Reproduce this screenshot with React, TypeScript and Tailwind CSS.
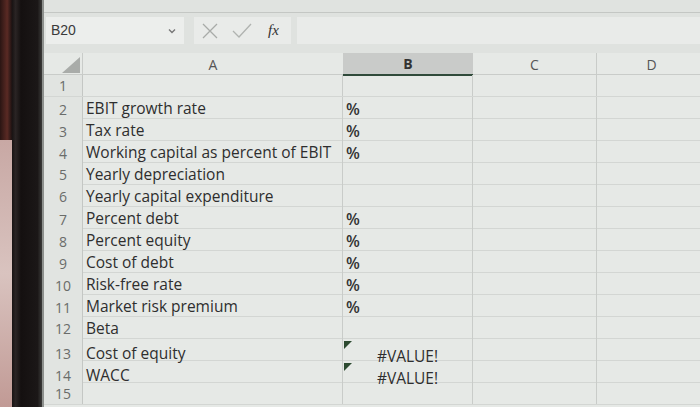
import React from 'react';

const rows: { label: string; b?: string; err?: boolean }[] = [
  { label: '' },
  { label: 'EBIT growth rate', b: '%' },
  { label: 'Tax rate', b: '%' },
  { label: 'Working capital as percent of EBIT', b: '%' },
  { label: 'Yearly depreciation' },
  { label: 'Yearly capital expenditure' },
  { label: 'Percent debt', b: '%' },
  { label: 'Percent equity', b: '%' },
  { label: 'Cost of debt', b: '%' },
  { label: 'Risk-free rate', b: '%' },
  { label: 'Market risk premium', b: '%' },
  { label: 'Beta' },
  { label: 'Cost of equity', err: true },
  { label: 'WACC', err: true },
  { label: '' },
];

const cols = 'grid grid-cols-[38px_261px_130px_124px_1fr]';

const App = () => {
  return (
    <div className="w-[700px] h-[407px] flex overflow-hidden bg-[#e6e9e6] font-['Open_Sans','Noto_Sans',sans-serif]">
      {/* monitor bezel */}
      <div className="w-[12px] flex flex-col">
        <div className="h-[140px] bg-[linear-gradient(90deg,#2a1513,#5a2a24_60%,#1c1212)]" />
        <div className="flex-1 bg-[linear-gradient(180deg,#c8a8a4,#d9c3bf_50%,#c19a95)]" />
      </div>
      <div className="w-[30px] bg-[linear-gradient(90deg,#181313,#2a2424_12%,#141010_30%,#1b1717_85%,#3a3a38)]" />
      <div className="w-[2px] bg-[#8d908d]" />

      <div className="flex-1 flex flex-col">
        {/* ribbon edge */}
        <div className="h-[13px] bg-[#e0e3e0] border-b border-[#c4c7c4]" />

        {/* formula bar */}
        <div className="h-[40px] flex items-start pt-[4px] bg-[#dfe2df]">
          <div className="ml-[2px] w-[138px] h-[27px] bg-[#eceeec] flex items-center justify-between px-[5px]">
            <span className="text-[14px] text-[#3a3a3a] font-['Liberation_Sans',sans-serif]">B20</span>
            <svg width="10" height="8" viewBox="0 0 10 8" className="mr-[2px]">
              <path d="M2 2.5 L5 5.5 L8 2.5" fill="none" stroke="#777" strokeWidth="1.4" />
            </svg>
          </div>
          <div className="ml-[10px] w-[97px] h-[27px] bg-[#e9ebe9] flex items-center pl-[6px] gap-[11px]">
            <svg width="20" height="18" viewBox="0 0 20 18">
              <path d="M3 2 L17 16 M17 2 L3 16" stroke="#a8aba8" strokeWidth="1.3" fill="none" />
            </svg>
            <svg width="22" height="18" viewBox="0 0 22 18">
              <path d="M2 9 L8 15 L20 2" stroke="#b0b3b0" strokeWidth="1.3" fill="none" />
            </svg>
            <span className="ml-[4px] text-[15px] italic text-[#333] font-['Liberation_Serif',serif]">fx</span>
          </div>
          <div className="ml-[6px] flex-1 h-[27px] bg-[#e9ebe9]" />
        </div>

        {/* column headers */}
        <div className={`${cols} h-[22px] border-b border-[#c9ccc9] text-[14px] text-[#555]`}>
          <div className="flex items-end justify-end pr-[2px] pb-[3px]">
            <svg width="18" height="16" viewBox="0 0 18 16">
              <path d="M18 0 L18 16 L0 16 Z" fill="#a9aca9" />
            </svg>
          </div>
          <div className="flex items-center justify-center border-l border-[#c9ccc9]">A</div>
          <div className="flex items-center justify-center bg-[#c9cbc9] border-b-2 border-[#2f4a3a] font-bold text-[#333]">B</div>
          <div className="flex items-center justify-center border-r border-[#c9ccc9]">C</div>
          <div className="flex items-center justify-center pl-[6px]">D</div>
        </div>

        {/* rows */}
        {rows.map((r, i) => (
          <div key={i} className={`${cols} h-[22px] border-b border-[#d3d6d3] text-[15.5px] text-[#2e2e2e]`}>
            <div className="flex items-center justify-center text-[14px] text-[#6a6c6a] bg-[#e1e4e1]">{i + 1}</div>
            <div className="flex items-center pl-[3px] border-l border-[#c4c7c4] border-r border-r-[#c9ccc9] whitespace-nowrap">{r.label}</div>
            <div className="relative flex items-center border-r border-[#c9ccc9]">
              {r.b && <span className="pl-[3px] text-[16px] font-semibold text-[#333]">{r.b}</span>}
              {r.err && (
                <>
                  <svg width="8" height="8" viewBox="0 0 8 8" className="absolute left-[1px] top-[2px]">
                    <path d="M0 0 L8 0 L0 8 Z" fill="#2c4a30" />
                  </svg>
                  <span className="w-full text-center mt-[6px]">#VALUE!</span>
                </>
              )}
            </div>
            <div className="border-r border-[#c9ccc9]" />
            <div />
          </div>
        ))}
      </div>
    </div>
  );
};

export default App;
